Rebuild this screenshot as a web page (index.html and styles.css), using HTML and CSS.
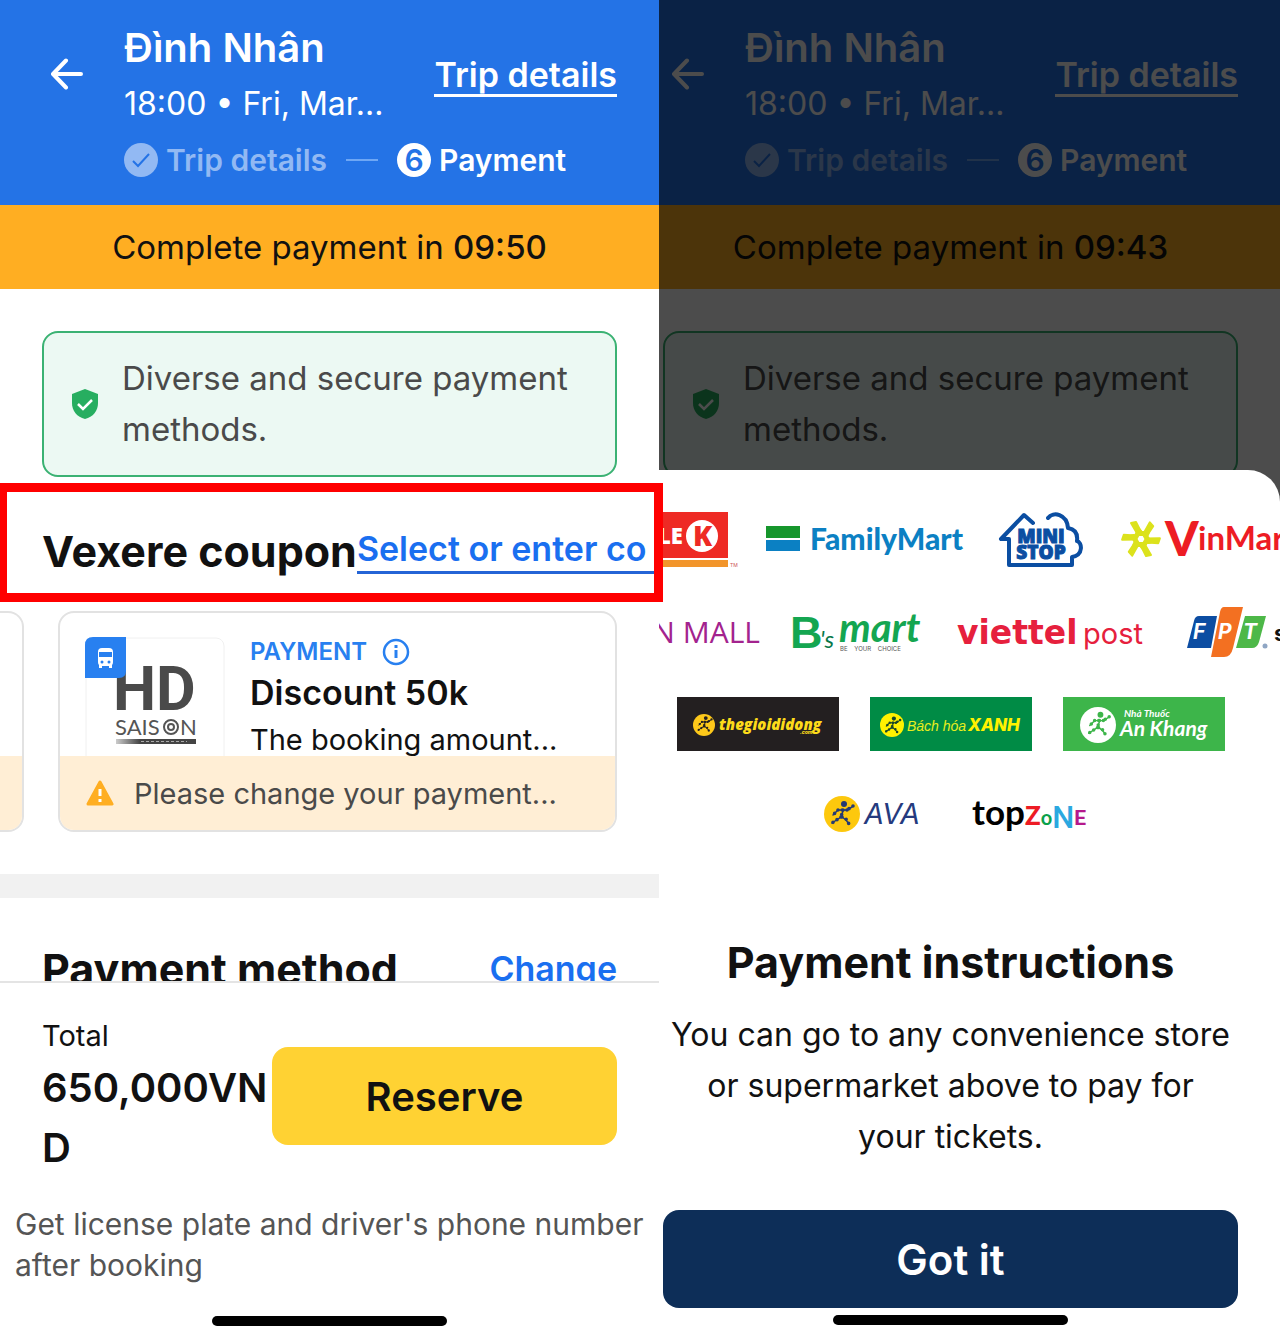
FILE: index.html
```html
<!DOCTYPE html>
<html lang="en">
<head>
<meta charset="utf-8">
<meta name="viewport" content="width=device-width, initial-scale=1">
<title>Payment</title>
<link rel="stylesheet" href="styles.css">
</head>
<body>
<svg class="defs" aria-hidden="true">
  <symbol id="arrow" viewBox="0 0 34 32"><path d="M16 2.500 3 16l13 13.500M3.500 16H31" fill="none" stroke="currentColor" stroke-width="4" stroke-linecap="round" stroke-linejoin="round"/></symbol>
  <symbol id="done" viewBox="0 0 34 34"><circle cx="17" cy="17" r="17" fill="currentColor"/><path d="M9 18l5 5 11-12" fill="none" stroke="#2473e6" stroke-width="2"/></symbol>
  <symbol id="shield" viewBox="0 0 26 30"><path d="M13 0 26 5v9c0 8-5 14-13 16C5 28 0 22 0 14V5z" fill="#27ae60"/><path d="M6 15l5 5 9-9" fill="none" stroke="#fff" stroke-width="2.500"/></symbol>
  <symbol id="runner" viewBox="0 0 36 36"><circle cx="20" cy="8" r="3" fill="currentColor"/><g fill="none" stroke="currentColor" stroke-linecap="round"><path d="M28 11 23 14 14 14 9 19M19 15l-2 6-9 6M18 21l4 3 3 4" stroke-width="1.500"/><path d="M29 10 23 14M23 14 14 14M14 14 9 19M19 14l-2 7M17 21l-9 6M18 21l4 2 3 5" stroke-width="3.600" stroke-dasharray="0 4.800"/></g></symbol>
</svg>
<main class="screens">
  <section class="screen">
    <header class="top">
      <div class="trip">
        <button class="back" aria-label="Back"><svg width="34" height="32"><use href="#arrow"/></svg></button>
        <div class="trip-info"><h1>Đình Nhân</h1><p>18:00 • Fri, Mar...</p></div>
        <a class="trip-link" href="#">Trip details</a>
      </div>
      <ol class="steps">
        <li class="past"><svg width="34" height="34"><use href="#done"/></svg>Trip details</li>
        <li class="dash"></li>
        <li><span class="num">6</span>Payment</li>
      </ol>
    </header>
    <p class="timer">Complete payment in <b>09:50</b></p>
    <div class="notice"><svg width="26" height="30"><use href="#shield"/></svg><p>Diverse and secure payment methods.</p></div>
    <div class="marked"><h2>Vexere coupon</h2><a href="#">Select or enter co</a></div>
    <div class="coupons">
      <div class="coupon peek"><div class="coupon-body"></div><div class="warn"></div></div>
      <article class="coupon">
        <div class="coupon-body">
          <svg class="brand" width="140" height="130" viewBox="0 0 140 130" aria-label="HD Saison">
            <rect x="1" y="1" width="138" height="140" rx="8" fill="#fff" stroke="#f0f0f0"/>
            <text x="28" y="73" font-family="Roboto" font-weight="700" font-size="61" fill="#4a4a4a">HD</text>
            <path d="M0 8q0-8 8-8h33v34q0 7-7 7H0z" fill="#2880f0"/>
            <rect x="13" y="11" width="15" height="18" rx="4" fill="#fff"/><path d="M14 15h13v5H14z" fill="#2880f0"/><circle cx="17" cy="25" r="1.500" fill="#2880f0"/><circle cx="24" cy="25" r="1.500" fill="#2880f0"/><path d="M14 28h3v3h-3zM24 28h3v3h-3z" fill="#fff"/>
            <text x="30" y="98" font-family="Lato" font-size="22" fill="#555">SAIS<tspan x="95">N</tspan></text>
            <g fill="none" stroke="#555" stroke-width="2"><circle cx="86" cy="90" r="7"/><circle cx="86" cy="90" r="3"/></g>
            <defs><linearGradient id="bar"><stop stop-color="#ccc"/><stop offset="0.300" stop-color="#444"/></linearGradient></defs>
            <rect x="31" y="102" width="80" height="5" fill="url(#bar)"/><path d="M56 104.500h46" stroke="#aaa" stroke-dasharray="3 2"/>
          </svg>
          <div class="coupon-text">
            <p class="kind">PAYMENT <svg width="28" height="28" viewBox="0 0 28 28"><circle cx="14" cy="14" r="12" fill="none" stroke="currentColor" stroke-width="2.500"/><path d="M14 12v8M14 7v3" stroke="currentColor" stroke-width="3"/></svg></p>
            <h3>Discount 50k</h3>
            <p class="terms">The booking amount...</p>
          </div>
        </div>
        <p class="warn"><svg width="28" height="26" viewBox="0 0 28 26"><path d="M14 2 26 24H2z" fill="#ffae22" stroke="#ffae22" stroke-width="3" stroke-linejoin="round"/><path d="M14 9v7M14 19v3" stroke="#fff" stroke-width="3"/></svg>Please change your payment...</p>
      </article>
    </div>
    <div class="band"></div>
    <div class="method"><h2>Payment method</h2><a href="#">Change</a></div>
    <footer class="checkout">
      <div class="pay">
        <div class="total"><p>Total</p><strong>650,000VND</strong></div>
        <button class="reserve">Reserve</button>
      </div>
      <p class="note">Get license plate and driver's phone number after booking</p>
      <div class="home"></div>
    </footer>
  </section>

  <section class="screen second">
    <div class="dimmed">
      <header class="top">
        <div class="trip">
          <button class="back" aria-label="Back"><svg width="34" height="32"><use href="#arrow"/></svg></button>
          <div class="trip-info"><h1>Đình Nhân</h1><p>18:00 • Fri, Mar...</p></div>
          <a class="trip-link" href="#">Trip details</a>
        </div>
        <ol class="steps">
          <li class="past"><svg width="34" height="34"><use href="#done"/></svg>Trip details</li>
          <li class="dash"></li>
          <li><span class="num">6</span>Payment</li>
        </ol>
      </header>
      <p class="timer">Complete payment in <b>09:43</b></p>
      <div class="notice"><svg width="26" height="30"><use href="#shield"/></svg><p>Diverse and secure payment methods.</p></div>
    </div>
    <div class="sheet">
      <div class="logos">
        <div class="logo-row wide">
          <svg width="69" height="60" viewBox="0 0 69 60" aria-label="Circle K">
            <path d="M-20 2h89v46h-89z" fill="#ee2a24"/><path d="M-20 50h89v7h-89z" fill="#f2952b"/>
            <text x="-1" y="34" font-family="Open Sans" font-weight="800" font-size="22" fill="#fff">LE</text>
            <circle cx="43" cy="26" r="16" fill="#fff"/><text x="34" y="36" font-family="Open Sans" font-weight="800" font-size="28" fill="#ee2a24">K</text>
            <text x="71" y="57" font-family="Inter" font-size="5" fill="#c55">TM</text>
          </svg>
          <svg width="195" height="60" viewBox="0 0 195 60" aria-label="FamilyMart">
            <path d="M0 16h34v12H0z" fill="#16962c"/><path d="M0 30h34v11H0z" fill="#0b80c3"/>
            <text x="44" y="40" font-family="Lato" font-weight="900" font-size="30" fill="#0b80c3">FamilyMart</text>
          </svg>
          <svg width="84" height="60" viewBox="0 0 84 60" aria-label="Ministop">
            <path d="M34 13 25 5 2 29h8v26h63v-8c12-2 10-15 5-16 1-8-3-12-9-13C68 4 54 1 49 8" fill="none" stroke="#0b4ea2" stroke-width="4" stroke-linejoin="round" stroke-linecap="round"/>
            <text x="42" y="33" text-anchor="middle" font-family="Open Sans" font-weight="800" font-size="19" fill="#0b4ea2" stroke="#0b4ea2">MINI<tspan x="42" y="49">STOP</tspan></text>
          </svg>
          <svg width="159" height="60" viewBox="0 0 159 60" aria-label="VinMart">
            <g fill="#dce21c" stroke="#dce21c" stroke-width="2" stroke-linejoin="round">
              <path id="blade" d="M10 13 15 12 20 22 28 22 27 25 17 25z"/>
              <use href="#blade" transform="rotate(60 20 29)"/><use href="#blade" transform="rotate(120 20 29)"/><use href="#blade" transform="rotate(180 20 29)"/><use href="#blade" transform="rotate(240 20 29)"/><use href="#blade" transform="rotate(300 20 29)"/>
            </g>
            <text x="44" y="46" font-family="Lato" font-weight="900" font-size="48" fill="#ed1c24">V<tspan x="77" y="40" font-size="33" font-weight="700">inMar</tspan></text>
          </svg>
        </div>
        <div class="logo-row wide">
          <svg width="97" height="60" viewBox="0 0 97 60" aria-label="Aeon Mall">
            <text x="101" y="41" text-anchor="end" font-family="Open Sans" font-size="30" fill="#a3238e">N MALL</text>
          </svg>
          <svg width="133" height="60" viewBox="0 0 133 60" aria-label="B's mart">
            <text x="0" y="46" font-family="Liberation Sans" font-weight="700" font-size="45" fill="#14a651">B<tspan x="30" font-family="Lato" font-style="italic" font-weight="400" font-size="24" fill="#087849">'s</tspan><tspan x="49" y="40" font-family="Lato" font-style="italic" font-weight="700" font-size="40">mart</tspan></text>
            <text x="50" y="49" font-family="Inter" font-size="6" fill="#555">BE&#160;&#160;&#160; YOUR&#160;&#160;&#160; CHOICE</text>
          </svg>
          <svg width="187" height="60" viewBox="0 0 187 60" aria-label="viettel post">
            <text x="0" y="42" font-family="DejaVu Sans" font-weight="700" font-size="33" fill="#e6203d">viettel<tspan x="126" font-family="Inter" font-weight="400" font-size="29">post</tspan></text>
          </svg>
          <svg width="102" height="60" viewBox="0 0 102 60" aria-label="FPT Shop">
            <path d="M21 14h18l-6 32H9l7-27q1-5 5-5z" fill="#0c4da2"/><path d="M67 14h21l-7 26q-2 6-7 6H58z" fill="#4db848"/><path d="M46 5h19l-10 41q-2 9-9 9H33l9-45q1-5 4-5z" fill="#f37021"/>
            <g font-family="Inter" font-weight="700" font-style="italic" font-size="21" fill="#fff"><text x="15" y="37">F</text><text x="40" y="37">P</text><text x="65" y="37">T</text></g>
            <circle cx="87" cy="44" r="2.500" fill="#8fa6c4"/><text x="96" y="39" font-family="Inter" font-weight="700" font-size="22" fill="#111">s</text>
          </svg>
        </div>
        <div class="logo-row boxes">
          <svg width="162" height="54" viewBox="0 0 162 54" aria-label="thegioididong">
            <path d="M0 0h162v54H0z" fill="#231f20"/><circle cx="27" cy="28" r="11" fill="#fdc81a"/><use href="#runner" x="16" y="16" width="23" height="23" color="#231f20"/>
            <text x="42" y="33" font-family="Open Sans" font-weight="800" font-style="italic" font-size="15" fill="#fddb1a">thegioididong<tspan x="123" y="37" font-family="Inter" font-size="5">.com</tspan></text>
          </svg>
          <svg width="162" height="54" viewBox="0 0 162 54" aria-label="Bách hóa Xanh">
            <path d="M0 0h162v54H0z" fill="#008b45"/><circle cx="22" cy="28" r="12" fill="#fff200"/><use href="#runner" x="10" y="16" width="25" height="25" color="#17472b"/>
            <text x="37" y="34" font-family="Liberation Sans" font-style="italic" font-size="14" fill="#e8ee1d">Bách hóa<tspan x="98" font-family="Inter" font-weight="800" font-size="17" fill="#fff200">XANH</tspan></text>
          </svg>
          <svg width="162" height="54" viewBox="0 0 162 54" aria-label="Nhà Thuốc An Khang">
            <path d="M0 0h162v54H0z" fill="#3db54a"/><circle cx="35" cy="28" r="18" fill="#fff"/><use href="#runner" x="18" y="10" width="35" height="35" color="#3db54a"/>
            <text x="61" y="20" font-family="Lato" font-style="italic" fill="#fff" font-size="10" font-weight="700">Nhà Thuốc<tspan x="57" y="39" font-size="21">An Khang</tspan></text>
          </svg>
        </div>
        <div class="logo-row last">
          <svg width="98" height="36" viewBox="0 0 98 36" aria-label="AVA">
            <circle cx="18" cy="16" r="18" fill="#fdc80d"/><use href="#runner" y="-2" width="36" height="36" color="#253a72"/>
            <text x="40" y="26" font-family="Inter" font-style="italic" font-size="29" fill="#253a7e">AVA</text>
          </svg>
          <svg width="109" height="36" viewBox="0 0 109 36" aria-label="topzone">
            <text x="0" y="27" font-family="Lato" font-weight="700" font-size="35" fill="#000">top<tspan font-size="26" font-weight="900" fill="#ed1c24">Z</tspan><tspan font-size="20" fill="#0aa14b">o</tspan><tspan y="30" font-family="Roboto" font-weight="500" font-size="31" fill="#2ba8e0">N</tspan><tspan y="27" font-family="Roboto" font-size="21" fill="#b5198c">E</tspan></text>
          </svg>
        </div>
      </div>
      <h2>Payment instructions</h2>
      <p class="guide">You can go to any convenience store or supermarket above to pay for your&nbsp;tickets.</p>
      <button class="got">Got it</button>
      <div class="home"></div>
    </div>
  </section>
</main>
</body>
</html>
```
FILE: styles.css
```css
* { box-sizing: border-box; }
body { margin: 0; background: #fff; color: #111; font-family: Inter, "Noto Sans", sans-serif; font-size: 33px; }
h1, h2, h3, p, ol { margin: 0; padding: 0; }
ol { list-style: none; }
button { border: 0; padding: 0; font: inherit; cursor: pointer; }
svg { flex: none; display: block; }
.defs { position: absolute; width: 0; height: 0; }

.screens { display: grid; grid-template-columns: 659fr 621fr; overflow: hidden; }
.screen { --inset: 42px; min-width: 0; }
.second { --inset: 4px; }

.top { background: #2473e6; color: #fff; padding: 20px 42px 17px var(--inset); }
.trip { display: flex; align-items: center; }
.back { width: 82px; padding: 0 0 5px 8px; background: none; color: inherit; }
.trip-info { flex: 1; min-width: 0; line-height: 56px; white-space: nowrap; font-size: 32px; }
.trip-info h1 { font-size: 40px; font-weight: 600; line-height: 56px; }
.trip-link { color: inherit; font-size: 34px; font-weight: 600; line-height: 38px; text-decoration: none; border-bottom: 3px solid; }
.steps { display: flex; align-items: center; height: 56px; padding-left: 82px; font-size: 30px; font-weight: 600; white-space: nowrap; }
.steps li { display: flex; align-items: center; gap: 8px; }
.steps .past { color: #92b9f3; }
.steps .dash { width: 32px; height: 2px; margin: 0 19px; background: #6ea7f5; }
.num { width: 34px; height: 34px; border-radius: 50%; background: #fff; color: #2473e6; text-align: center; line-height: 34px; }

.timer { background: #ffae22; line-height: 84px; text-align: center; white-space: nowrap; }
.second .timer { padding-right: 38px; }
.timer b { font-weight: 500; }

.notice { display: flex; align-items: center; gap: 24px; margin: 42px 42px 0 var(--inset); padding: 20px 20px 20px 28px; border: 2px solid #3bb273; border-radius: 16px; background: #ecf9f3; color: #4a4a4a; line-height: 51px; }

.marked { position: relative; z-index: 2; display: flex; align-items: center; height: 119px; margin: 6px -4px 0 0; padding: 16px 0 0 35px; border: 9px solid #f00; border-left-width: 7px; overflow: hidden; white-space: nowrap; }
h2 { font-size: 43px; font-weight: 700; line-height: 50px; }
.marked a, .method a { color: #1a6ff0; font-weight: 600; font-size: 34px; text-decoration: none; }
.marked a { flex: 1; border-bottom: 3px solid #2464d6; line-height: 44px; }

.coupons { display: flex; gap: 34px; padding: 9px 42px 42px 0; }
.coupon { flex: 1; min-width: 0; border: 2px solid #e2e2e2; border-radius: 16px; overflow: hidden; }
.coupon.peek { flex: 0 0 24px; border-left: 0; border-radius: 0 16px 16px 0; }
.coupon-body { display: flex; gap: 25px; height: 143px; padding: 24px 0 0 25px; overflow: hidden; }
.coupon-text { white-space: nowrap; }
.kind { display: flex; align-items: center; gap: 15px; color: #2880f0; font-size: 24px; font-weight: 600; line-height: 30px; }
.coupon h3 { font-size: 34px; font-weight: 600; line-height: 52px; }
.terms { font-size: 29px; line-height: 42px; }
.warn { display: flex; align-items: center; gap: 20px; height: 74px; padding-left: 26px; background: #ffeed5; color: #4a4a4a; font-size: 29px; white-space: nowrap; }

.band { height: 24px; background: #f1f1f1; }
.method { display: flex; justify-content: space-between; padding: 46px 42px 0; line-height: 50px; }

.checkout { position: relative; margin-top: -13px; background: #fff; border-top: 2px solid #e4e4e4; padding: 31px 0 17px; }
.pay { display: flex; align-items: center; padding: 0 42px; }
.total { flex: 1; min-width: 0; font-size: 29px; line-height: 44px; }
.total strong { display: block; font-size: 40px; font-weight: 600; line-height: 60px; overflow-wrap: anywhere; }
.reserve { flex: 0 0 60%; height: 98px; border-radius: 16px; background: #ffd233; color: #111; font-size: 40px; font-weight: 600; }
.note { margin-top: 26px; padding: 0 8px 0 15px; color: #555; font-size: 30px; line-height: 41px; }
.home { width: 235px; height: 10px; margin: 30px auto 0; border-radius: 5px; background: #000; }

.dimmed { position: relative; padding-bottom: 33px; }
.dimmed::after { content: ""; position: absolute; inset: 0; background: rgba(0, 0, 0, 0.7); }
.sheet { position: relative; margin-top: -40px; padding: 25px 42px 17px 4px; background: #fff; border-radius: 0 32px 0 0; text-align: center; }
.logos { display: grid; gap: 2px; margin: 0 -42px 76px -4px; overflow: hidden; }
.logo-row { display: flex; align-items: center; height: 90px; }
.logo-row svg { overflow: visible; }
.wide { justify-content: space-between; }
.boxes { justify-content: center; gap: 31px; padding-right: 38px; }
.last { justify-content: center; gap: 50px; padding-right: 34px; }
.guide { margin-top: 22px; font-size: 32px; line-height: 51px; }
.got { width: 100%; height: 98px; margin-top: 48px; border-radius: 16px; background: #0d2e58; color: #fff; font-size: 42px; font-weight: 600; }
.sheet .home { margin-top: 7px; }
```
